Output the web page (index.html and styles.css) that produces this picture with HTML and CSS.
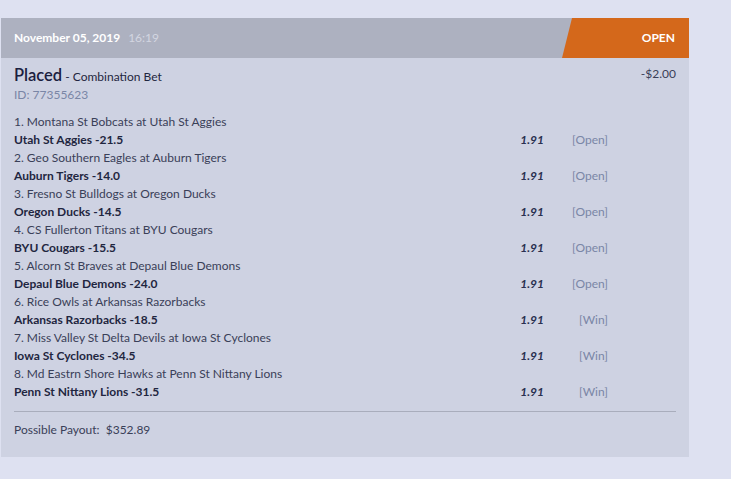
FILE: index.html
```html
<!DOCTYPE html>
<html lang="en">
<head>
    <meta charset="UTF-8">
    <title>Bet</title>
    <link rel="stylesheet" href="styles.css">
</head>
<body>
    <div class="bet">
        <div class="bet-head">
            <div class="bet-date">November 05, 2019 <span class="bet-time">16:19</span></div>
            <div class="bet-status">OPEN</div>
        </div>
        <div class="bet-body">
            <div class="bet-top">
                <div>
                    <div class="bet-title"><span class="placed">Placed</span> - Combination Bet</div>
                    <div class="bet-id">ID: 77355623</div>
                </div>
                <div class="bet-stake">-$2.00</div>
            </div>
            <div class="legs">
                <div class="leg-game">1. Montana St Bobcats at Utah St Aggies</div>
                <div class="leg-pick"><span class="pick">Utah St Aggies -21.5</span><span class="odds">1.91</span><span class="result">[Open]</span></div>
                <div class="leg-game">2. Geo Southern Eagles at Auburn Tigers</div>
                <div class="leg-pick"><span class="pick">Auburn Tigers -14.0</span><span class="odds">1.91</span><span class="result">[Open]</span></div>
                <div class="leg-game">3. Fresno St Bulldogs at Oregon Ducks</div>
                <div class="leg-pick"><span class="pick">Oregon Ducks -14.5</span><span class="odds">1.91</span><span class="result">[Open]</span></div>
                <div class="leg-game">4. CS Fullerton Titans at BYU Cougars</div>
                <div class="leg-pick"><span class="pick">BYU Cougars -15.5</span><span class="odds">1.91</span><span class="result">[Open]</span></div>
                <div class="leg-game">5. Alcorn St Braves at Depaul Blue Demons</div>
                <div class="leg-pick"><span class="pick">Depaul Blue Demons -24.0</span><span class="odds">1.91</span><span class="result">[Open]</span></div>
                <div class="leg-game">6. Rice Owls at Arkansas Razorbacks</div>
                <div class="leg-pick"><span class="pick">Arkansas Razorbacks -18.5</span><span class="odds">1.91</span><span class="result">[Win]</span></div>
                <div class="leg-game">7. Miss Valley St Delta Devils at Iowa St Cyclones</div>
                <div class="leg-pick"><span class="pick">Iowa St Cyclones -34.5</span><span class="odds">1.91</span><span class="result">[Win]</span></div>
                <div class="leg-game">8. Md Eastrn Shore Hawks at Penn St Nittany Lions</div>
                <div class="leg-pick"><span class="pick">Penn St Nittany Lions -31.5</span><span class="odds">1.91</span><span class="result">[Win]</span></div>
            </div>
            <div class="bet-payout">Possible Payout:&nbsp; $352.89</div>
        </div>
    </div>
</body>
</html>
```
FILE: styles.css
```css
body {
    margin: 0;
    padding: 18px 42px 22px 1px;
    background-color: #dee1f1;
    font-family: Lato, "Open Sans", sans-serif;
    font-size: 12px;
    color: #1f2640;
}
.bet {
    background-color: #ced2e2;
}
.bet-head {
    display: flex;
    height: 40px;
    background-color: #adb1c0;
}
.bet-date {
    flex: 1;
    padding-left: 13px;
    line-height: 40px;
    color: #fff;
    font-weight: bold;
}
.bet-time {
    margin-left: 5px;
    color: #d3d6e1;
    font-weight: normal;
}
.bet-status {
    width: 127px;
    padding-right: 14px;
    box-sizing: border-box;
    line-height: 40px;
    text-align: right;
    color: #fff;
    font-weight: bold;
    background-color: #d4681b;
    clip-path: polygon(10px 0, 100% 0, 100% 100%, 0 100%);
}
.bet-body {
    padding: 8px 13px 18px 13px;
}
.bet-top {
    display: flex;
    justify-content: space-between;
}
.bet-title {
    line-height: 19px;
}
.placed {
    font-size: 16.5px;
    font-weight: 600;
    color: #1a2040;
}
.bet-id {
    line-height: 18px;
    color: #7a86a6;
}
.bet-stake {
    color: #3a4058;
}
.legs {
    margin-top: 9px;
    padding-bottom: 10px;
    border-bottom: 1px solid #a9adbc;
}
.leg-game {
    line-height: 18px;
    color: #3a4058;
}
.leg-pick {
    display: flex;
    line-height: 18px;
}
.pick {
    flex: 1;
    font-weight: bold;
}
.odds {
    font-weight: bold;
    font-style: italic;
    color: #2a3050;
}
.result {
    width: 64px;
    margin-right: 68px;
    text-align: right;
    color: #7a86a6;
}
.bet-payout {
    margin-top: 9px;
    line-height: 18px;
    color: #3a4058;
}
```
